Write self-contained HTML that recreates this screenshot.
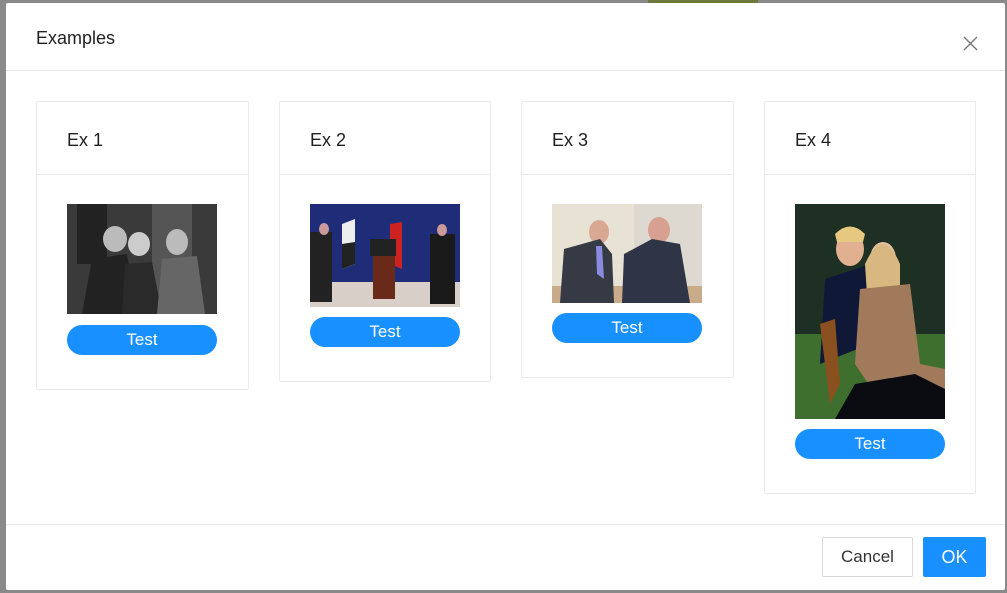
<!DOCTYPE html>
<html><head><meta charset="utf-8"><style>
*{box-sizing:border-box;margin:0;padding:0}
body{width:1007px;height:593px;background:#8a8a8a;position:relative;overflow:hidden;font-family:"Liberation Sans",sans-serif}
.modal{position:absolute;left:6px;top:3px;width:999px;height:587px;background:#fff;border-radius:2px}
.abs{position:absolute}
.title{left:30px;top:25px;font-size:18px;color:#222}
.hline{left:0;width:999px;height:1px;background:#e8e8e8}
.card{position:absolute;border:1px solid #ebebeb;border-radius:2px;background:#fff}
.card .h{position:absolute;left:30px;top:28px;font-size:18px;color:#222}
.card .l{position:absolute;left:0;right:0;top:72px;height:1px;background:#ebebeb}
.btn{position:absolute;height:30px;width:150px;border-radius:15px;background:#1890ff;color:#fff;font-size:17px;text-align:center;line-height:30px}
.img{position:absolute;width:150px;overflow:hidden}
.f{position:absolute;border-radius:2px;font-size:17px;text-align:center;line-height:38px}
</style></head><body>
<div class="abs" style="left:648px;top:0;width:110px;height:3px;background:#6b7a3a"></div>
<div class="modal">
<div class="abs title">Examples</div>
<svg class="abs" style="left:957px;top:33px" width="15" height="15" viewBox="0 0 15 15"><path d="M1 1L14 14M14 1L1 14" stroke="#777" stroke-width="1.4"/></svg>
<div class="abs hline" style="top:67px"></div>

<div class="card" style="left:30px;top:98px;width:213px;height:289px"><div class="h">Ex 1</div><div class="l"></div></div>
<div class="card" style="left:273px;top:98px;width:212px;height:281px"><div class="h">Ex 2</div><div class="l"></div></div>
<div class="card" style="left:515px;top:98px;width:213px;height:277px"><div class="h">Ex 3</div><div class="l"></div></div>
<div class="card" style="left:758px;top:98px;width:212px;height:393px"><div class="h">Ex 4</div><div class="l"></div></div>

<div class="img" style="left:61px;top:201px;height:110px">
<svg width="150" height="110"><rect width="150" height="110" fill="#3a3a3a"/><rect x="10" y="0" width="30" height="60" fill="#222"/><rect x="85" y="0" width="40" height="110" fill="#555"/><ellipse cx="48" cy="35" rx="12" ry="13" fill="#bbb"/><ellipse cx="72" cy="40" rx="11" ry="12" fill="#ccc"/><ellipse cx="110" cy="38" rx="11" ry="13" fill="#bbb"/><path d="M15 110L25 55L60 50L70 110Z" fill="#222"/><path d="M55 110L58 60L85 58L95 110Z" fill="#2a2a2a"/><path d="M90 110L95 55L130 52L138 110Z" fill="#666"/></svg></div>
<div class="img" style="left:304px;top:201px;height:103px">
<svg width="150" height="103"><rect width="150" height="80" fill="#1f2d78"/><rect y="78" width="150" height="25" fill="#d8d0c8"/><rect x="0" y="28" width="22" height="70" fill="#222"/><ellipse cx="14" cy="25" rx="5" ry="6" fill="#c99"/><path d="M32 20L45 15L45 60L32 65Z" fill="#eee"/><path d="M32 40L45 38L45 60L32 65Z" fill="#222"/><path d="M80 20L92 18L92 65L80 60Z" fill="#c22"/><rect x="63" y="50" width="22" height="45" fill="#6a2a1a"/><rect x="60" y="35" width="26" height="17" fill="#222"/><rect x="120" y="30" width="25" height="70" fill="#1a1a1a"/><ellipse cx="132" cy="26" rx="5" ry="6" fill="#c99"/></svg></div>
<div class="img" style="left:546px;top:201px;height:99px">
<svg width="150" height="99"><rect width="150" height="99" fill="#e8e2d4"/><rect x="82" width="68" height="99" fill="#ddd8d0"/><rect y="82" width="150" height="17" fill="#c9ab8a"/><ellipse cx="47" cy="28" rx="10" ry="12" fill="#d9a893"/><path d="M8 99L12 45L48 35L60 50L62 99Z" fill="#353a44"/><ellipse cx="107" cy="26" rx="11" ry="13" fill="#d8a090"/><path d="M70 99L72 50L100 35L128 40L138 99Z" fill="#2f3546"/><path d="M44 42L50 42L52 75L45 70Z" fill="#8a8ae0"/></svg></div>
<div class="img" style="left:789px;top:201px;height:215px">
<svg width="150" height="215"><rect width="150" height="215" fill="#1e2f24"/><rect y="130" width="150" height="85" fill="#3f6f2e"/><ellipse cx="55" cy="45" rx="14" ry="17" fill="#e0b090"/><path d="M40 30Q55 15 70 30L68 38L42 38Z" fill="#e6c880"/><path d="M25 160L30 75L70 62L75 140Z" fill="#101838"/><ellipse cx="88" cy="55" rx="13" ry="17" fill="#e8c0a0"/><path d="M70 60Q88 20 105 60L105 90L72 90Z" fill="#d8b880"/><path d="M60 160L65 85L115 80L125 160L150 165L150 190L80 190Z" fill="#a07a5a"/><path d="M25 120L40 115L45 180L35 200Z" fill="#8a5020"/><path d="M40 215L60 180L120 170L150 185L150 215Z" fill="#0a0c12"/></svg></div>

<div class="btn" style="left:61px;top:322px">Test</div>
<div class="btn" style="left:304px;top:314px">Test</div>
<div class="btn" style="left:546px;top:310px">Test</div>
<div class="btn" style="left:789px;top:426px">Test</div>

<div class="abs hline" style="top:521px"></div>
<div class="f" style="left:816px;top:534px;width:91px;height:40px;border:1px solid #d9d9d9;color:#333;background:#fff">Cancel</div>
<div class="f" style="left:917px;top:534px;width:63px;height:40px;background:#1890ff;color:#fff;line-height:40px;font-size:18px">OK</div>
</div>
</body></html>
